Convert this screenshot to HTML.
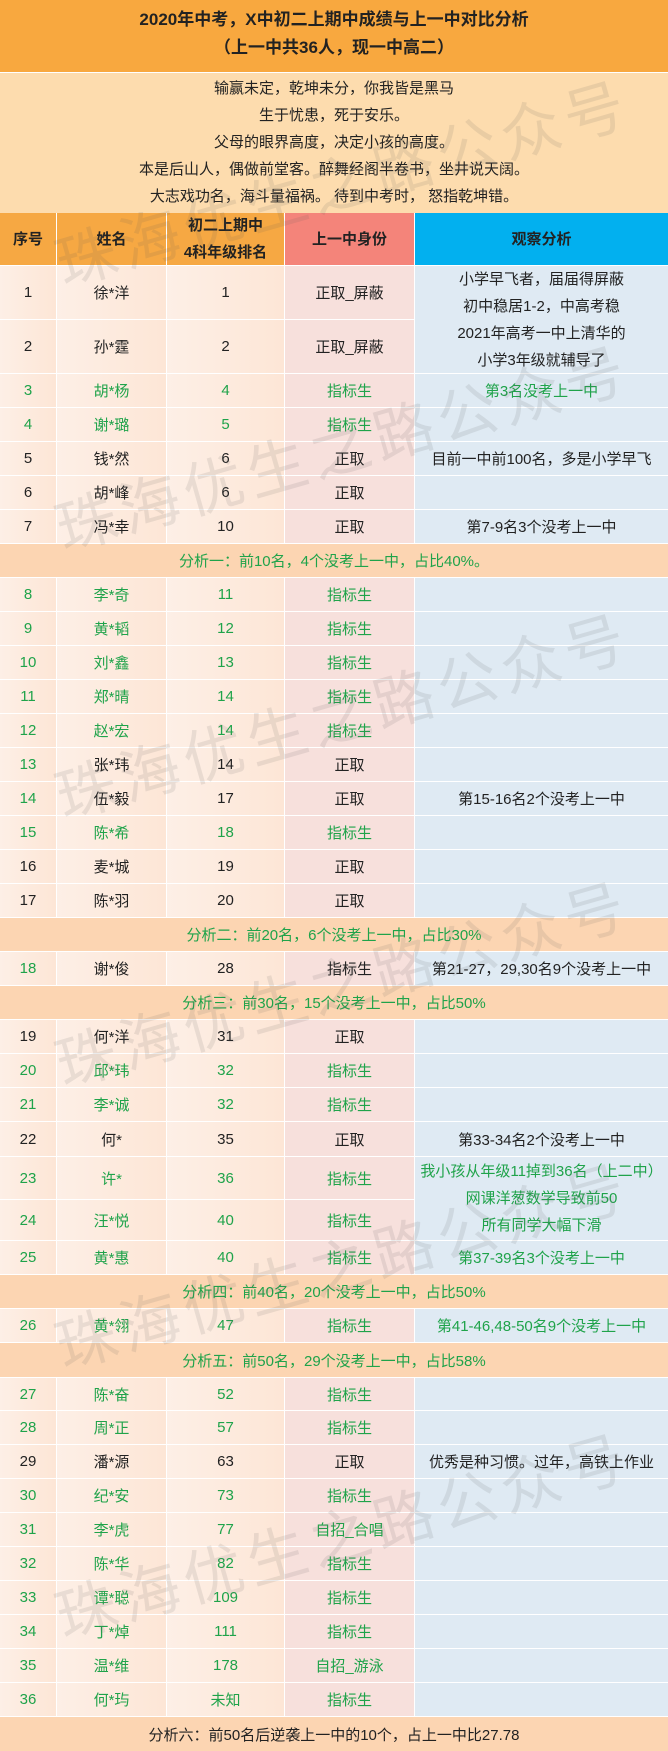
<!DOCTYPE html>
<html><head><meta charset="utf-8"><style>
*{margin:0;padding:0;box-sizing:border-box}
body{width:668px;height:1751px;overflow:hidden;background:#fff;font-family:"Liberation Sans","Noto Sans CJK SC",sans-serif;font-size:15px;color:#222;position:relative}
.abs{position:absolute;left:0;width:668px}
.title{top:0;height:72px;background:#f8a83f;text-align:center;font-weight:bold;font-size:17px;line-height:28px;padding-top:6px;color:#222}
.motto{top:72px;height:141px;background:#fddcae;text-align:center;line-height:27px;padding-top:2px;border-top:1px solid #fff}
.row{position:absolute;left:0;width:668px;display:flex}
.row>div{height:100%;display:flex;align-items:center;justify-content:center;border-right:1px solid #fff;border-bottom:1px solid #fff;text-align:center}
.c1{width:57px}.c2{width:110px}.c3{width:118px}.c4{width:130px}.c5{width:253px;border-right:none!important}
.b .c1,.b .c2,.b .c3{background:linear-gradient(90deg,#fdefe6,#fde6d6)}
.b .c4{background:#f7e0dc}
.b .c5{background:#dfeaf3}
.g{color:#1fa34a}
.an{position:absolute;left:0;width:668px;background:#fcd5b2;text-align:center;display:flex;align-items:center;justify-content:center;border-bottom:1px solid #fff}
.hd>div{font-weight:bold;background:#f6a843;line-height:27px}
.note{position:absolute;left:415px;width:253px;text-align:center;line-height:27px;background:#dfeaf3}
.wm{position:absolute;left:58px;font-size:60px;line-height:64px;color:rgba(90,90,90,0.12);transform-origin:left center;transform:rotate(-16deg);white-space:nowrap;letter-spacing:6px}
</style></head><body>
<div class="abs title">2020年中考，X中初二上期中成绩与上一中对比分析<br>（上一中共36人，现一中高二）</div>
<div class="abs motto">输赢未定，乾坤未分，你我皆是黑马<br>生于忧患，死于安乐。<br>父母的眼界高度，决定小孩的高度。<br>本是后山人，偶做前堂客。醉舞经阁半卷书，坐井说天阔。<br>大志戏功名，海斗量福祸。 待到中考时， 怒指乾坤错。</div>
<div class="row hd" style="top:213px;height:53px"><div class="c1">序号</div><div class="c2">姓名</div><div class="c3">初二上期中<br>4科年级排名</div><div class="c4" style="background:#f4847a">上一中身份</div><div class="c5" style="background:#02b0ef">观察分析</div></div>

<div class="row b" style="top:266px;height:54px"><div class="c1">1</div><div class="c2">徐*洋</div><div class="c3">1</div><div class="c4">正取_屏蔽</div><div class="c5"></div></div>
<div class="row b" style="top:320px;height:54px"><div class="c1">2</div><div class="c2">孙*霆</div><div class="c3">2</div><div class="c4">正取_屏蔽</div><div class="c5"></div></div>
<div class="note" style="top:266px;height:107px;padding-top:0">小学早飞者，届届得屏蔽<br>初中稳居1-2，中高考稳<br>2021年高考一中上清华的<br>小学3年级就辅导了</div>
<div class="row b g" style="top:374px;height:34px"><div class="c1">3</div><div class="c2">胡*杨</div><div class="c3">4</div><div class="c4">指标生</div><div class="c5">第3名没考上一中</div></div>
<div class="row b g" style="top:408px;height:34px"><div class="c1">4</div><div class="c2">谢*璐</div><div class="c3">5</div><div class="c4">指标生</div><div class="c5"></div></div>
<div class="row b" style="top:442px;height:34px"><div class="c1">5</div><div class="c2">钱*然</div><div class="c3">6</div><div class="c4">正取</div><div class="c5">目前一中前100名，多是小学早飞</div></div>
<div class="row b" style="top:476px;height:34px"><div class="c1">6</div><div class="c2">胡*峰</div><div class="c3">6</div><div class="c4">正取</div><div class="c5"></div></div>
<div class="row b" style="top:510px;height:34px"><div class="c1">7</div><div class="c2">冯*幸</div><div class="c3">10</div><div class="c4">正取</div><div class="c5">第7-9名3个没考上一中</div></div>
<div class="an g" style="top:544px;height:34px">分析一：前10名，4个没考上一中，占比40%。</div>
<div class="row b g" style="top:578px;height:34px"><div class="c1">8</div><div class="c2">李*奇</div><div class="c3">11</div><div class="c4">指标生</div><div class="c5"></div></div>
<div class="row b g" style="top:612px;height:34px"><div class="c1">9</div><div class="c2">黄*韬</div><div class="c3">12</div><div class="c4">指标生</div><div class="c5"></div></div>
<div class="row b g" style="top:646px;height:34px"><div class="c1">10</div><div class="c2">刘*鑫</div><div class="c3">13</div><div class="c4">指标生</div><div class="c5"></div></div>
<div class="row b g" style="top:680px;height:34px"><div class="c1">11</div><div class="c2">郑*晴</div><div class="c3">14</div><div class="c4">指标生</div><div class="c5"></div></div>
<div class="row b g" style="top:714px;height:34px"><div class="c1">12</div><div class="c2">赵*宏</div><div class="c3">14</div><div class="c4">指标生</div><div class="c5"></div></div>
<div class="row b" style="top:748px;height:34px"><div class="c1 g">13</div><div class="c2">张*玮</div><div class="c3">14</div><div class="c4">正取</div><div class="c5"></div></div>
<div class="row b" style="top:782px;height:34px"><div class="c1 g">14</div><div class="c2">伍*毅</div><div class="c3">17</div><div class="c4">正取</div><div class="c5">第15-16名2个没考上一中</div></div>
<div class="row b g" style="top:816px;height:34px"><div class="c1">15</div><div class="c2">陈*希</div><div class="c3">18</div><div class="c4">指标生</div><div class="c5"></div></div>
<div class="row b" style="top:850px;height:34px"><div class="c1">16</div><div class="c2">麦*城</div><div class="c3">19</div><div class="c4">正取</div><div class="c5"></div></div>
<div class="row b" style="top:884px;height:34px"><div class="c1">17</div><div class="c2">陈*羽</div><div class="c3">20</div><div class="c4">正取</div><div class="c5"></div></div>
<div class="an g" style="top:918px;height:34px">分析二：前20名，6个没考上一中，占比30%</div>
<div class="row b" style="top:952px;height:34px"><div class="c1 g">18</div><div class="c2">谢*俊</div><div class="c3">28</div><div class="c4">指标生</div><div class="c5">第21-27，29,30名9个没考上一中</div></div>
<div class="an g" style="top:986px;height:34px">分析三：前30名，15个没考上一中，占比50%</div>
<div class="row b" style="top:1020px;height:34px"><div class="c1">19</div><div class="c2">何*洋</div><div class="c3">31</div><div class="c4">正取</div><div class="c5"></div></div>
<div class="row b g" style="top:1054px;height:34px"><div class="c1">20</div><div class="c2">邱*玮</div><div class="c3">32</div><div class="c4">指标生</div><div class="c5"></div></div>
<div class="row b g" style="top:1088px;height:34px"><div class="c1">21</div><div class="c2">李*诚</div><div class="c3">32</div><div class="c4">指标生</div><div class="c5"></div></div>
<div class="row b" style="top:1122px;height:35px"><div class="c1">22</div><div class="c2">何*</div><div class="c3">35</div><div class="c4">正取</div><div class="c5">第33-34名2个没考上一中</div></div>
<div class="row b g" style="top:1157px;height:43px"><div class="c1">23</div><div class="c2">许*</div><div class="c3">36</div><div class="c4">指标生</div><div class="c5"></div></div>
<div class="row b g" style="top:1200px;height:41px"><div class="c1">24</div><div class="c2">汪*悦</div><div class="c3">40</div><div class="c4">指标生</div><div class="c5"></div></div>
<div class="note g" style="top:1157px;height:83px;padding-top:1px">我小孩从年级11掉到36名（上二中）<br>网课洋葱数学导致前50<br>所有同学大幅下滑</div>
<div class="row b g" style="top:1241px;height:34px"><div class="c1">25</div><div class="c2">黄*惠</div><div class="c3">40</div><div class="c4">指标生</div><div class="c5">第37-39名3个没考上一中</div></div>
<div class="an g" style="top:1275px;height:34px">分析四：前40名，20个没考上一中，占比50%</div>
<div class="row b g" style="top:1309px;height:34px"><div class="c1">26</div><div class="c2">黄*翎</div><div class="c3">47</div><div class="c4">指标生</div><div class="c5">第41-46,48-50名9个没考上一中</div></div>
<div class="an g" style="top:1343px;height:35px">分析五：前50名，29个没考上一中，占比58%</div>
<div class="row b g" style="top:1378px;height:33px"><div class="c1">27</div><div class="c2">陈*奋</div><div class="c3">52</div><div class="c4">指标生</div><div class="c5"></div></div>
<div class="row b g" style="top:1411px;height:34px"><div class="c1">28</div><div class="c2">周*正</div><div class="c3">57</div><div class="c4">指标生</div><div class="c5"></div></div>
<div class="row b" style="top:1445px;height:34px"><div class="c1">29</div><div class="c2">潘*源</div><div class="c3">63</div><div class="c4">正取</div><div class="c5">优秀是种习惯。过年，高铁上作业</div></div>
<div class="row b g" style="top:1479px;height:34px"><div class="c1">30</div><div class="c2">纪*安</div><div class="c3">73</div><div class="c4">指标生</div><div class="c5"></div></div>
<div class="row b g" style="top:1513px;height:34px"><div class="c1">31</div><div class="c2">李*虎</div><div class="c3">77</div><div class="c4">自招_合唱</div><div class="c5"></div></div>
<div class="row b g" style="top:1547px;height:34px"><div class="c1">32</div><div class="c2">陈*华</div><div class="c3">82</div><div class="c4">指标生</div><div class="c5"></div></div>
<div class="row b g" style="top:1581px;height:34px"><div class="c1">33</div><div class="c2">谭*聪</div><div class="c3">109</div><div class="c4">指标生</div><div class="c5"></div></div>
<div class="row b g" style="top:1615px;height:34px"><div class="c1">34</div><div class="c2">丁*焯</div><div class="c3">111</div><div class="c4">指标生</div><div class="c5"></div></div>
<div class="row b g" style="top:1649px;height:34px"><div class="c1">35</div><div class="c2">温*维</div><div class="c3">178</div><div class="c4">自招_游泳</div><div class="c5"></div></div>
<div class="row b g" style="top:1683px;height:34px"><div class="c1">36</div><div class="c2">何*玙</div><div class="c3">未知</div><div class="c4">指标生</div><div class="c5"></div></div>
<div class="an" style="top:1717px;height:34px;border:none">分析六：前50名后逆袭上一中的10个，占上一中比27.78</div>

<div class="wm" style="top:235px">珠海优生之路公众号</div>
<div class="wm" style="top:500px">珠海优生之路公众号</div>
<div class="wm" style="top:768px">珠海优生之路公众号</div>
<div class="wm" style="top:1036px">珠海优生之路公众号</div>
<div class="wm" style="top:1318px">珠海优生之路公众号</div>
<div class="wm" style="top:1588px">珠海优生之路公众号</div>
</body></html>
